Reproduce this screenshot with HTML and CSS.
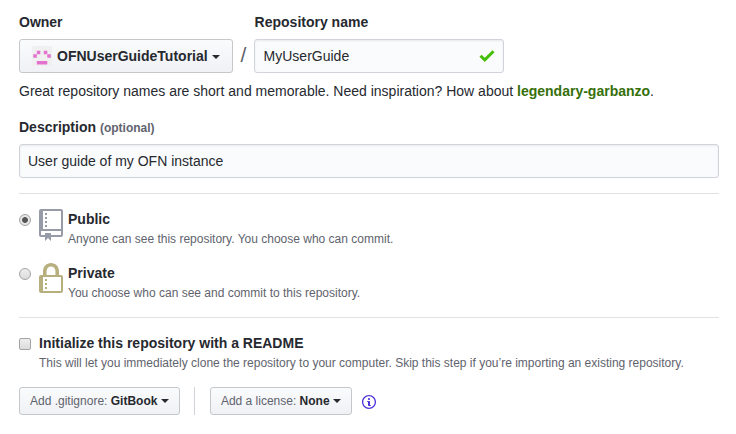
FILE: index.html
```html
<!DOCTYPE html>
<html lang="en">
<head>
<meta charset="utf-8">
<title>Create a new repository</title>
<link rel="stylesheet" href="styles.css">
</head>
<body>
<form class="new-repo">
  <div class="name-row">
    <div class="field owner">
      <span class="label">Owner</span>
      <button type="button" class="btn owner-btn">
        <svg class="avatar" width="20" height="20" viewBox="0 0 20 20"><rect width="20" height="20" rx="2" fill="#f0f0f0"/><path fill="#e372cf" d="M4.8 4.8h3.5v3.5H4.8zM11.8 4.8h3.5v3.5h-3.5zM1.3 8.3h3.5v3.5H1.3zM15.3 8.3h3.5v3.5h-3.5zM4.8 15.1h10.5v3.5H4.8z"/></svg>
        <span>OFNUserGuideTutorial</span><i class="caret"></i>
      </button>
    </div>
    <span class="slash">/</span>
    <div class="field">
      <label class="label name-label" for="name">Repository name</label>
      <div class="name-box">
        <input id="name" class="input name-input" type="text" value="MyUserGuide">
        <svg class="check" width="16" height="12" viewBox="0 0 16 12"><path fill="none" stroke="#44bf07" stroke-width="3" d="M1.5 5.7l4.3 4.2L14.5 1.3"/></svg>
      </div>
    </div>
  </div>
  <p class="hint">Great repository names are short and memorable. Need inspiration? How about <strong>legendary-garbanzo</strong>.</p>
  <label class="label" for="desc">Description <span class="optional">(optional)</span></label>
  <input id="desc" class="input" type="text" value="User guide of my OFN instance">
  <hr>
  <div class="option">
    <span class="radio checked"></span>
    <svg class="repo" width="24" height="32" viewBox="0 0 12 16"><path d="M4 9H3V8h1v1zm0-3H3v1h1V6zm0-2H3v1h1V4zm0-2H3v1h1V2zm8-1v12c0 .55-.45 1-1 1H6v2l-1.5-1.5L3 16v-2H1c-.55 0-1-.45-1-1V1c0-.55.45-1 1-1h10c.55 0 1 .45 1 1zm-1 10H1v2h2v-1h3v1h5v-2zm0-10H2v9h9V1z"/></svg>
    <div class="text"><b>Public</b><span class="note">Anyone can see this repository. You choose who can commit.</span></div>
  </div>
  <div class="option">
    <span class="radio"></span>
    <svg class="lock" width="24" height="32" viewBox="0 0 12 16"><path d="M4 13H3v-1h1v1zm8-6v7c0 .55-.45 1-1 1H1c-.55 0-1-.45-1-1V7c0-.55.45-1 1-1h1V4c0-2.2 1.8-4 4-4s4 1.8 4 4v2h1c.55 0 1 .45 1 1zM3.8 6h4.41V4c0-1.22-.98-2.2-2.2-2.2-1.22 0-2.2.98-2.2 2.2v2H3.8zM11 7H2v7h9V7zM4 8H3v1h1V8zm0 2H3v1h1v-1z"/></svg>
    <div class="text"><b>Private</b><span class="note">You choose who can see and commit to this repository.</span></div>
  </div>
  <hr class="second">
  <div class="option readme">
    <span class="checkbox"></span>
    <div class="text"><b>Initialize this repository with a README</b><span class="note">This will let you immediately clone the repository to your computer. Skip this step if you’re importing an existing repository.</span></div>
  </div>
  <div class="extras">
    <button type="button" class="btn btn-sm">Add .gitignore:&nbsp;<b>GitBook</b><i class="caret"></i></button>
    <span class="divider"></span>
    <button type="button" class="btn btn-sm license">Add a license:&nbsp;<b>None</b><i class="caret"></i></button>
    <svg class="info" width="14" height="16" viewBox="0 0 14 16"><path d="M6.3 5.69a.942.942 0 0 1-.28-.7c0-.28.09-.52.28-.7.19-.18.42-.28.7-.28.28 0 .52.09.7.28.18.19.28.42.28.7 0 .28-.09.52-.28.7a1 1 0 0 1-.7.3c-.28 0-.52-.11-.7-.3zM8 7.99c-.02-.25-.11-.48-.31-.69-.2-.19-.42-.3-.69-.31H6c-.27.02-.48.13-.69.31-.2.2-.3.44-.31.69h1v3c.02.27.11.5.31.69.2.2.42.31.69.31h1c.27 0 .48-.11.69-.31.2-.19.3-.42.31-.69H8V7.98v.01zM7 2.3c-3.14 0-5.7 2.54-5.7 5.68 0 3.14 2.56 5.7 5.7 5.7s5.7-2.55 5.7-5.7c0-3.15-2.56-5.69-5.7-5.69v.01zM7 .98c3.86 0 7 3.14 7 7s-3.14 7-7 7-7-3.12-7-7 3.14-7 7-7z"/></svg>
  </div>
</form>
</body>
</html>
```
FILE: styles.css
```css
* { box-sizing: border-box; }
body {
  margin: 0;
  background: #fff;
  color: #26292f;
  font: 14px/21px "Liberation Sans", Arial, sans-serif;
}
.new-repo { width: 719px; padding: 12px 0 0 19px; }
.name-row { display: flex; align-items: flex-end; }
.label { display: block; height: 27px; font-weight: bold; }
.name-label { padding-left: 0.6px; }
.optional { font-size: 12px; color: #5f636d; }
.btn {
  display: flex;
  align-items: center;
  margin: 0;
  border: 1px solid #c5c8cb;
  border-radius: 3px;
  background: linear-gradient(#fafbfc, #eff1f5);
  color: #26292f;
  font: bold 14px/20px "Liberation Sans", Arial, sans-serif;
  white-space: nowrap;
}
.owner-btn { width: 214px; height: 34px; padding: 0 12px; }
.avatar { margin-right: 5px; }
.caret {
  margin-left: 4px;
  border: 4px solid transparent;
  border-top-color: #26292f;
  border-bottom: 0;
}
.owner-btn .caret { margin-top: 2px; }
.slash { width: 21px; height: 34px; color: #5f636d; font-size: 21px; line-height: 32px; text-align: center; }
.name-box { position: relative; width: 250px; }
.check { position: absolute; right: 9px; top: 11px; }
.input {
  display: block;
  width: 100%;
  height: 34px;
  padding: 0 8px;
  border: 1px solid #d1d3da;
  border-radius: 3px;
  background: #fafbfc;
  box-shadow: inset 0 1px 2px rgba(27, 31, 35, .075);
  color: #26292f;
  font: 14px/20px "Liberation Sans", Arial, sans-serif;
}
.name-input { padding-left: 8.6px; }
.hint { margin: 8px 0 15px; }
.hint strong { color: #35700a; }
hr { height: 1px; margin: 15px 0; border: 0; background: #dfe1e5; }
.option { display: flex; align-items: flex-start; height: 54px; }
.radio, .checkbox {
  flex: none;
  width: 12px;
  height: 12px;
  margin: 5px 8px 0 0;
  border: 1px solid #a3a3a3;
  background: linear-gradient(#eee, #dcdcdc);
}
.radio { border-radius: 50%; }
.radio.checked { background: radial-gradient(circle, #555 0 2.5px, #e6e6e6 3.3px); }
.checkbox { border-radius: 2px; }
.repo { fill: #979ba8; }
.lock { fill: #b7b07e; }
.text { display: flex; flex-direction: column; margin-left: 5px; }
.note { color: #5f636d; font-size: 12px; line-height: 18px; }
hr.second { margin: 0 0 15px; }
.readme { height: 54px; }
.readme .text { margin-left: 0; }
.extras { display: flex; align-items: center; }
.btn-sm { height: 28px; padding: 0 10px; color: #5f636d; font-size: 12px; font-weight: normal; }
.btn-sm b { color: #26292f; }
.license { width: 142px; padding: 0 9.5px; }
.license .caret { margin-left: 3.4px; }
.divider { width: 1px; height: 28px; margin: 0 15px 0 14px; background: #d1d3da; }
.info { margin: 1px 0 0 10px; fill: #4e31da; }
```
